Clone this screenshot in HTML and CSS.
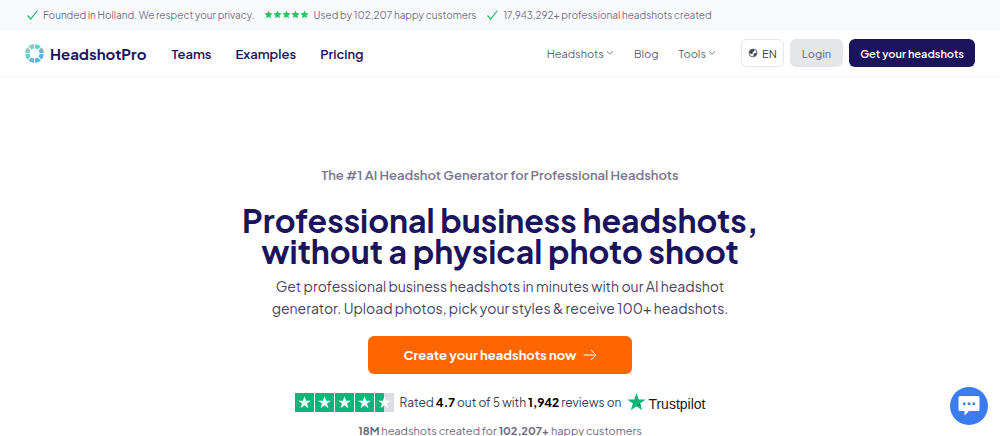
FILE: index.html
```html
<!DOCTYPE html>
<html lang="en">
<head>
    <meta charset="UTF-8">
    <meta name="viewport" content="width=device-width, initial-scale=1.0">
    <title>HeadshotPro</title>
    <link rel="stylesheet" href="styles.css">
</head>
<body>
    <!-- Shared icons -->
    <svg class="sprite" aria-hidden="true">
        <symbol id="check" viewBox="0 0 12 12"><path d="M1 6.5 4.2 10 11 1.5" fill="none" stroke="currentColor" stroke-width="1.2"/></symbol>
        <symbol id="star" viewBox="0 0 20 20"><path d="M10 0.5 12.4 7.4H19.7L13.8 11.7 16 18.7 10 14.4 4 18.7 6.2 11.7 0.3 7.4H7.6Z" fill="currentColor"/></symbol>
        <symbol id="rate" viewBox="0 0 20 20"><path d="M10 1 12.6 6.8 19 7.5 14.3 12 15.5 18.3 10 15.2 4.5 18.3 5.7 12 1 7.5 7.4 6.8Z" fill="currentColor"/></symbol>
        <symbol id="chevron" viewBox="0 0 8 8"><path d="M1 2.3 4 5.2 7 2.3" fill="none" stroke="currentColor" stroke-width="0.8"/></symbol>
    </svg>

    <div class="topbar">
        <span class="topbar-item"><svg class="check"><use href="#check"/></svg>Founded in Holland. We respect your privacy.</span>
        <span class="topbar-item">
            <span class="stars">
                <svg><use href="#rate"/></svg><svg><use href="#rate"/></svg><svg><use href="#rate"/></svg><svg><use href="#rate"/></svg><svg><use href="#rate"/></svg>
            </span>Used by 102,207 happy customers
        </span>
        <span class="topbar-item"><svg class="check"><use href="#check"/></svg>17,943,292+ professional headshots created</span>
    </div>

    <header class="header">
        <a class="logo" href="#">
            <svg viewBox="0 0 20 20" aria-hidden="true">
                <defs>
                    <linearGradient id="ring" x1="0" y1="0" x2="1" y2="1">
                        <stop offset="0.2" stop-color="#78d2c8"/>
                        <stop offset="0.8" stop-color="#62aee2"/>
                    </linearGradient>
                </defs>
                <circle cx="10" cy="10" r="7.6" fill="none" stroke="url(#ring)" stroke-width="4.6"/>
                <path d="M10 0V5.5M10 14.5V20M0 10H5.5M14.5 10H20" stroke="#fff" stroke-width="1"/>
                <path d="M2.5 2.5 6.8 6.8M17.500 2.500 13.200 6.800M2.500 17.500 6.800 13.200M17.500 17.500 13.200 13.200" stroke="#fff" stroke-width="1.300"/>
            </svg>
            HeadshotPro
        </a>
        <nav class="nav-main">
            <a href="#">Teams</a>
            <a href="#">Examples</a>
            <a href="#">Pricing</a>
        </nav>
        <nav class="nav-side">
            <a href="#">Headshots<svg><use href="#chevron"/></svg></a>
            <a href="#">Blog</a>
            <a href="#">Tools<svg><use href="#chevron"/></svg></a>
        </nav>
        <div class="actions">
            <button class="btn btn-lang">
                <svg viewBox="0 0 10 10" aria-hidden="true">
                    <circle cx="5" cy="5" r="3.9" fill="#fff" stroke="#3c4350" stroke-width="0.8"/>
                    <path d="M1.3 5C1.3 2.5 3 1.2 5.4 1.2L6.8 2 5.6 3.6 4.5 4.2 5 5.6 3.4 6.2 2.6 5.4ZM6 5.4 8.6 4.8C8.6 6.6 7.6 8 6 8.6L5.2 7.2Z" fill="#3c4350"/>
                </svg>EN
            </button>
            <button class="btn btn-login">Login</button>
            <button class="btn btn-start">Get your headshots</button>
        </div>
    </header>

    <main class="hero">
        <p class="tagline">The #1 AI Headshot Generator for Professional Headshots</p>
        <h1>Professional business headshots,<br>without a physical photo shoot</h1>
        <p class="intro">Get professional business headshots in minutes with our AI headshot<br>generator. Upload photos, pick your styles &amp; receive 100+ headshots.</p>
        <button class="cta">
            Create your headshots now
            <svg viewBox="0 0 14 12" aria-hidden="true"><path d="M0.5 6H13M8 1 13 6 8 11" fill="none" stroke="currentColor"/></svg>
        </button>
        <div class="rating">
            <span class="boxes">
                <span class="box"><svg><use href="#star"/></svg></span>
                <span class="box"><svg><use href="#star"/></svg></span>
                <span class="box"><svg><use href="#star"/></svg></span>
                <span class="box"><svg><use href="#star"/></svg></span>
                <span class="box half"><svg><use href="#star"/></svg></span>
            </span>
            <span class="rating-text">Rated <b>4.7</b> out of 5 with <b>1,942</b> reviews on</span>
            <a class="trustpilot" href="#">
                <svg viewBox="0 0 20 20" aria-hidden="true"><use href="#star"/><path d="M13.8 11.7 14.5 14 10 14.4Z" fill="#0a8a58"/></svg>
                Trustpilot
            </a>
        </div>
        <p class="stats"><b>18M</b> headshots created for <b>102,207+</b> happy customers</p>
    </main>

    <button class="chat" aria-label="Chat">
        <svg viewBox="0 0 22 20" aria-hidden="true">
            <path d="M2 0H20A1.5 1.5 0 0 1 21.5 1.5V13.5A1.5 1.5 0 0 1 20 15H11L6.5 19.5V15H2A1.5 1.5 0 0 1 0.5 13.5V1.5A1.5 1.5 0 0 1 2 0Z" fill="#fff"/>
            <path d="M5 6.5H7.5V9H5ZM9.8 6.5H12.3V9H9.8ZM14.6 6.5H17.1V9H14.6Z" fill="#3b7df0"/>
        </svg>
    </button>
</body>
</html>
```
FILE: styles.css
```css
* {
    box-sizing: border-box;
}
body {
    font-family: 'Plus Jakarta Sans', Inter, sans-serif;
    margin: 0;
    background-color: #fff;
    color: #1b145d;
}
a {
    color: inherit;
    text-decoration: none;
}
p, h1 {
    margin: 0;
}
button {
    font-family: inherit;
    cursor: pointer;
}
.sprite {
    display: none;
}
.topbar {
    display: flex;
    gap: 10px;
    height: 30px;
    padding: 0 26px;
    background-color: #f8fafc;
    border-bottom: 1px solid #f3f5f7;
    color: #747188;
    font-size: 10px;
}
.topbar-item {
    display: flex;
    align-items: center;
    gap: 4px;
    white-space: nowrap;
}
.check {
    width: 13px;
    height: 12px;
    color: #22b865;
}
.stars {
    display: flex;
    color: #22c55e;
}
.stars svg {
    width: 9px;
    height: 9px;
}
.header {
    display: flex;
    align-items: center;
    height: 47px;
    padding: 0 25px;
    border-bottom: 1px solid #fafafb;
}
.logo {
    display: flex;
    align-items: center;
    gap: 6px;
    font-size: 15px;
    font-weight: 700;
}
.logo svg {
    width: 19px;
    height: 19px;
}
.nav-main {
    display: flex;
    gap: 24px;
    margin-left: 25px;
    padding-top: 2px;
    font-size: 13px;
    font-weight: 600;
}
.nav-side {
    display: flex;
    gap: 20px;
    margin-left: auto;
    color: #5d6472;
    font-size: 11px;
}
.nav-side a {
    display: flex;
    align-items: center;
    gap: 2px;
}
.nav-side svg {
    width: 8px;
    height: 8px;
}
.actions {
    display: flex;
    gap: 6px;
    margin-left: 25px;
}
.btn {
    display: flex;
    align-items: center;
    justify-content: center;
    height: 28px;
    padding: 0 11px;
    border: 0;
    border-radius: 6px;
    font-size: 11px;
    white-space: nowrap;
}
.btn-lang {
    gap: 4px;
    padding: 0 6px;
    border: 1px solid #e5e7eb;
    background-color: #fff;
    color: #374151;
}
.btn-lang svg {
    width: 10px;
    height: 10px;
}
.btn-login {
    padding: 0 12px;
    background-color: #e5e6ea;
    color: #777487;
    font-weight: 500;
}
.btn-start {
    background-color: #1b145d;
    color: #fff;
    font-weight: 600;
}
.hero {
    display: flex;
    flex-direction: column;
    align-items: center;
    padding: 90px 20px 0;
    text-align: center;
}
.tagline {
    color: #7a768f;
    font-size: 13px;
    font-weight: 600;
    line-height: 16px;
}
h1 {
    margin-top: 22px;
    font-size: 32px;
    font-weight: 700;
    line-height: 31px;
}
.intro {
    margin-top: 8px;
    color: #48435f;
    font-size: 14px;
    line-height: 22px;
}
.cta {
    display: flex;
    align-items: center;
    justify-content: center;
    gap: 6px;
    height: 38px;
    margin-top: 17px;
    padding: 0 35px;
    border: 0;
    border-radius: 6px;
    background-color: #ff6600;
    color: #fff;
    font-size: 13px;
    font-weight: 700;
}
.cta svg {
    width: 14px;
    height: 12px;
}
.rating {
    display: flex;
    align-items: center;
    gap: 6px;
    height: 20px;
    margin-top: 18px;
}
.boxes {
    display: flex;
    gap: 1px;
}
.box {
    display: grid;
    place-items: center;
    width: 19px;
    height: 19px;
    background-color: #0cb67a;
    color: #fff;
}
.box svg {
    width: 13px;
    height: 13px;
}
.half {
    background: linear-gradient(90deg, #0cb67a 50%, #dcdce6 50%);
}
.rating-text {
    color: #374151;
    font-size: 12px;
}
.rating-text b {
    color: #000;
}
.trustpilot {
    display: flex;
    align-items: flex-end;
    gap: 2px;
    color: #191919;
    font-family: 'Liberation Sans', Arial, sans-serif;
    font-size: 14px;
    line-height: 16px;
}
.trustpilot svg {
    width: 19px;
    height: 20px;
    color: #0cb67a;
}
.stats {
    margin-top: 11px;
    color: #6d6984;
    font-size: 11px;
    line-height: 16px;
}
.chat {
    position: fixed;
    right: 12px;
    bottom: 11px;
    display: grid;
    place-items: center;
    width: 38px;
    height: 38px;
    padding: 0;
    border: 0;
    border-radius: 50%;
    background-color: #3b7df0;
}
.chat svg {
    width: 22px;
    height: 20px;
}
```
